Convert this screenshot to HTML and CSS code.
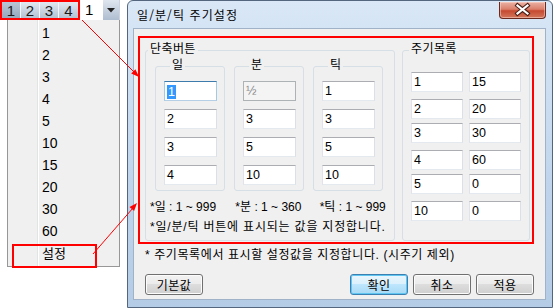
FILE: index.html
```html
<!DOCTYPE html>
<html lang="ko">
<head>
    <meta charset="UTF-8">
    <title>일/분/틱 주기설정</title>
    <link rel="stylesheet" href="styles.css">
</head>
<body>
<div class="desk">
    <!-- Chart toolbar with tick buttons and period combo -->
    <div class="toolbar">
        <div class="tick-buttons">
            <span class="tb-btn pressed">1</span>
            <span class="tb-btn">2</span>
            <span class="tb-btn">3</span>
            <span class="tb-btn">4</span>
        </div>
        <div class="combo">
            <span class="combo-value">1</span>
            <span class="combo-arrow">
                <svg width="8" height="5" viewBox="0 0 8 5"><path d="M0 0H8L4 4.5Z" fill="#222"/></svg>
            </span>
        </div>
    </div>

    <ul class="dropdown">
        <li>1</li>
        <li>2</li>
        <li>3</li>
        <li>4</li>
        <li>5</li>
        <li>10</li>
        <li>15</li>
        <li>20</li>
        <li>30</li>
        <li>60</li>
        <li class="setting"><span>설정</span></li>
    </ul>

    <!-- Settings dialog -->
    <div class="window">
        <div class="titlebar">
            <span class="title">일/분/틱 주기설정</span>
            <span class="close">
                <svg width="45" height="15" viewBox="0 0 45 15">
                    <path d="M17.5 3.5L27.5 11.5M27.5 3.5L17.5 11.5" stroke="#4a1f17" stroke-width="4.2" stroke-linecap="square"/>
                    <path d="M17.5 3.5L27.5 11.5M27.5 3.5L17.5 11.5" stroke="#fff" stroke-width="2.2" stroke-linecap="square"/>
                </svg>
            </span>
        </div>

        <div class="client">
            <div class="highlight">
                <fieldset class="group shortcut">
                    <legend>단축버튼</legend>
                    <div class="sub-groups">
                        <fieldset class="sub">
                            <legend>일</legend>
                            <div class="field focused"><span class="sel">1</span></div>
                            <div class="field">2</div>
                            <div class="field">3</div>
                            <div class="field">4</div>
                        </fieldset>
                        <fieldset class="sub">
                            <legend>분</legend>
                            <div class="field disabled">½</div>
                            <div class="field">3</div>
                            <div class="field">5</div>
                            <div class="field">10</div>
                        </fieldset>
                        <fieldset class="sub">
                            <legend>틱</legend>
                            <div class="field">1</div>
                            <div class="field">3</div>
                            <div class="field">5</div>
                            <div class="field">10</div>
                        </fieldset>
                    </div>
                    <div class="notes">
                        <div class="ranges">
                            <span class="range">*일 : 1 ~ 999</span>
                            <span class="range">*분 : 1 ~ 360</span>
                            <span>*틱 : 1 ~ 999</span>
                        </div>
                        <div class="spaced">*일/분/틱 버튼에 표시되는 값을 지정합니다.</div>
                    </div>
                </fieldset>

                <fieldset class="group cycles">
                    <legend>주기목록</legend>
                    <div class="cycle-list">
                        <div class="cycle-row"><div class="field">1</div><div class="field">15</div></div>
                        <div class="cycle-row"><div class="field">2</div><div class="field">20</div></div>
                        <div class="cycle-row"><div class="field">3</div><div class="field">30</div></div>
                        <div class="cycle-row"><div class="field">4</div><div class="field">60</div></div>
                        <div class="cycle-row"><div class="field">5</div><div class="field">0</div></div>
                        <div class="cycle-row"><div class="field">10</div><div class="field">0</div></div>
                    </div>
                </fieldset>
            </div>

            <p class="footnote">* 주기목록에서 표시할 설정값을 지정합니다. (시주기 제외)</p>

            <div class="buttons">
                <span class="btn">기본값</span>
                <span class="btn default">확인</span>
                <span class="btn">취소</span>
                <span class="btn">적용</span>
            </div>
        </div>
    </div>

    <!-- Annotation arrows -->
    <svg class="arrows" width="553" height="308" viewBox="0 0 553 308">
        <line x1="82" y1="20" x2="134" y2="72" stroke="#f00" stroke-width="1"/>
        <polygon points="139,77 131.2,73.4 135.4,69.2" fill="#f00"/>
        <line x1="93" y1="254" x2="133" y2="208" stroke="#f00" stroke-width="1"/>
        <polygon points="137,203 134.1,211 129.5,207.1" fill="#f00"/>
    </svg>
</div>
</body>
</html>
```

FILE: styles.css
```css
/* Base */
* {
    box-sizing: border-box;
}

body {
    margin: 0;
    background: #fff;
    font-family: "Liberation Sans", "Noto Sans CJK KR", sans-serif;
    font-size: 12px;
    color: #000;
}

.desk {
    position: relative;
    width: 553px;
    height: 308px;
    overflow: hidden;
}

/* Toolbar */
.toolbar {
    display: flex;
    height: 20px;
}

.tick-buttons {
    display: flex;
    width: 80px;
    height: 20px;
    border: 2px solid #f00;
}

.tb-btn {
    width: 19px;
    display: flex;
    align-items: center;
    justify-content: center;
    font-size: 15px;
    color: #1c1c1c;
    background: linear-gradient(#e2e8f0, #b4c2d4);
    border-right: 1px solid #f2f5f9;
}

.tb-btn:last-child {
    border-right: none;
}

.tb-btn.pressed {
    background: linear-gradient(#b9c6d6, #97a8bd);
}

.combo {
    display: flex;
    margin-left: 2px;
    width: 38px;
}

.combo-value {
    width: 21px;
    background: #fff;
    padding-left: 3px;
    font-size: 15px;
    line-height: 20px;
}

.combo-arrow {
    width: 17px;
    display: flex;
    align-items: center;
    justify-content: center;
    background: linear-gradient(#dfe6ef, #aebdd0);
    border-right: 1px solid #c9d3df;
}

/* Dropdown menu */
.dropdown {
    position: absolute;
    left: 7px;
    top: 20px;
    width: 113px;
    height: 247px;
    margin: 0;
    padding: 2px 0 0;
    list-style: none;
    border: 1px solid #979797;
    border-top: none;
    background: linear-gradient(to right, transparent 29px, #e2e3e3 29px, #e2e3e3 30px, #fff 30px, #fff 31px, transparent 31px), #f0f0f0;
    font-size: 14px;
}

.dropdown li {
    position: relative;
    height: 22px;
    line-height: 22px;
    padding-left: 34px;
}

.dropdown .setting span {
    font-size: 13px;
}

.dropdown .setting::after {
    content: "";
    position: absolute;
    left: 4px;
    top: 2px;
    width: 81px;
    height: 20px;
    border: 2px solid #f00;
}

/* Dialog window */
.window {
    position: absolute;
    left: 127px;
    top: 0;
    width: 426px;
    height: 308px;
    padding: 0 6px 7px 5px;
    border: 1px solid #53667e;
    border-radius: 6px 6px 0 0;
    background: linear-gradient(#d9e7f6, #c0d5ec 60%, #b5cce6);
}

.titlebar {
    display: flex;
    justify-content: space-between;
    align-items: flex-start;
    height: 27px;
    padding-left: 4px;
}

.title {
    align-self: center;
    margin-top: 1px;
    font-family: "Noto Sans CJK KR", sans-serif;
    font-size: 12px;
    line-height: 14px;
    letter-spacing: 1.1px;
}

.close {
    width: 47px;
    height: 17px;
    margin-top: 1px;
    border: 1px solid #6b2a20;
    border-top: none;
    border-radius: 0 0 4px 4px;
    background: linear-gradient(#eab1a4, #db7f6b 45%, #c64a31 55%, #d2775c);
    box-shadow: inset 0 0 0 1px rgba(255, 220, 210, 0.5);
}

.close svg {
    display: block;
}

.client {
    height: 272px;
    padding: 7px 0 0 4px;
    border: 1px solid #a0b2c8;
    background: #f0f0f0;
}

/* Red annotation box round the editable area */
.highlight {
    display: flex;
    gap: 7px;
    width: 396px;
    height: 208px;
    padding: 4px 0 0 5px;
    border: 2px solid #f00;
}

fieldset {
    margin: 0;
    padding: 0;
    min-width: 0;
    border: 1px solid #d5dfe5;
    border-radius: 3px;
}

legend {
    padding: 0 2px 4px;
    font-family: "Noto Sans CJK KR", sans-serif;
    font-size: 12px;
    line-height: 12px;
    letter-spacing: 0.4px;
}

.shortcut {
    width: 250px;
    height: 199px;
}

.shortcut > legend {
    margin-left: 2px;
}

.sub-groups {
    display: flex;
    gap: 9px;
    padding-left: 9px;
}

.sub {
    display: flex;
    flex-direction: column;
    gap: 8px;
    width: 70px;
    height: 133px;
    padding: 7px 0 0 8px;
}

.sub legend {
    margin-left: 6px;
}

.notes {
    margin-top: 6px;
    padding-left: 4px;
    line-height: 20px;
}

.spaced {
    letter-spacing: 0.8px;
}

.range {
    display: inline-block;
    width: 82px;
}

.range + .range {
    width: 81px;
}

.cycles {
    width: 128px;
    height: 199px;
}

.cycles legend {
    margin-left: 6px;
}

.cycle-list {
    padding: 14px 0 0 8px;
}

.cycle-row {
    display: flex;
    gap: 6px;
    margin-top: 4px;
}

.cycle-row:first-child {
    margin-top: 0;
}

.cycle-row:nth-child(even) {
    margin-top: 7px;
}

/* Text boxes */
.field {
    width: 53px;
    height: 20px;
    padding-left: 2px;
    line-height: 18px;
    font-size: 12.5px;
    background: #fff;
    border: 1px solid;
    border-color: #abadb3 #dbdfe6 #e3e9ef #e2e3ea;
}

.cycle-row .field {
    width: 52px;
}

.field.focused {
    border-color: #3d7bad #a4c9e3 #b5cfe7 #a4c9e3;
    padding-top: 1px;
}

.sel {
    display: inline-block;
    padding: 0 1px;
    line-height: 14px;
    background: #3399ff;
    color: #fff;
}

.field.disabled {
    background: #f4f4f4;
    border-color: #adb2b5;
    color: #8a8a8a;
}

/* Footer */
.footnote {
    margin: 3px 0 0 7px;
    line-height: 16px;
    letter-spacing: 0.6px;
}

.buttons {
    display: flex;
    gap: 5px;
    margin-top: 11px;
    padding: 0 11px 0 7px;
}

.btn {
    width: 58px;
    height: 21px;
    display: flex;
    align-items: center;
    justify-content: center;
    font-family: "Noto Sans CJK KR", sans-serif;
    font-size: 12px;
    letter-spacing: 0.5px;
    border: 1px solid #707070;
    border-radius: 3px;
    background: linear-gradient(#f2f2f2, #ebebeb 50%, #dddddd 50%, #cfcfcf);
    box-shadow: inset 0 0 0 1px #fcfcfc;
}

.btn.default {
    margin-left: auto;
    border-color: #3c7fb1;
    background: linear-gradient(#eaf6fd, #d9f0fc 50%, #bee6fd 50%, #a7d9f5);
    box-shadow: inset 0 0 0 1px #5fc6f2;
}

/* Annotation arrows */
.arrows {
    position: absolute;
    left: 0;
    top: 0;
    pointer-events: none;
}
```
